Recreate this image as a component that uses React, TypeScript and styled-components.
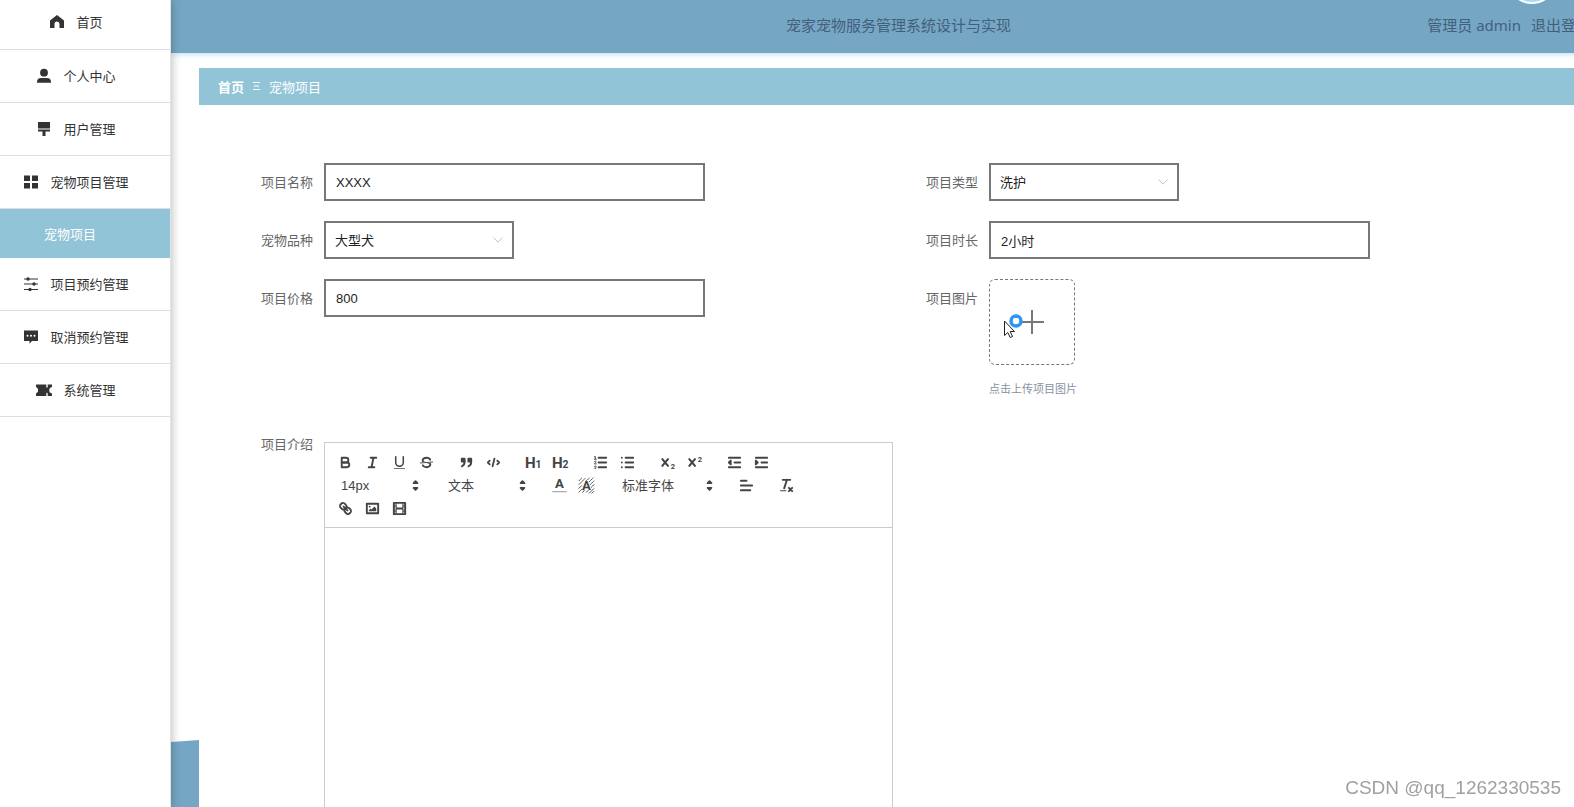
import React from 'react';
import styled, { createGlobalStyle } from 'styled-components';

const cjk = '"Noto Sans", "Noto Sans CJK SC", sans-serif';
const latin = '"Liberation Sans", "Noto Sans CJK SC", sans-serif';

const GlobalStyle = createGlobalStyle`
  * { box-sizing: border-box; }
  body {
    margin: 0;
    background: #fff;
    font-family: ${cjk};
    font-size: 13px;
    color: #333;
  }
`;

const Shell = styled.div`
  display: flex;
  height: 100vh;
  overflow: hidden;
`;

/* ---------- sidebar ---------- */

const Sidebar = styled.nav`
  position: relative;
  z-index: 2;
  flex: 0 0 171px;
  background: #fff;
  border-right: 1px solid #e0e4e6;
  box-shadow: 0 0 10px rgba(0, 0, 0, 0.3);
`;

const NavList = styled.ul`
  margin: 0;
  padding: 0;
  list-style: none;
`;

const NavLink = styled.a<{ $first?: boolean }>`
  display: flex;
  align-items: center;
  justify-content: center;
  gap: 12px;
  height: ${(p) => (p.$first ? 50 : 53)}px;
  padding: 0 17px ${(p) => (p.$first ? 6 : 0)}px 0;
  border-bottom: 1px solid #dcdfe2;
  color: #333;
  line-height: 20px;
  text-decoration: none;
`;

const SubLink = styled.a`
  display: flex;
  align-items: center;
  justify-content: center;
  height: 49px;
  padding-right: 30px;
  background: #92c4d7;
  color: #fff;
  text-decoration: none;
`;

const NavIcon = styled.svg`
  width: 14px;
  height: 14px;
  overflow: visible;
  flex: none;
`;

/* ---------- main column ---------- */

const Main = styled.div`
  flex: 1;
  min-width: 0;
  display: flex;
  flex-direction: column;
`;

const Header = styled.header`
  position: relative;
  z-index: 1;
  flex: 0 0 53px;
  width: calc(100% + 52px);
  display: grid;
  grid-template-columns: 1fr auto 1fr;
  align-items: center;
  padding: 0 35px 5px;
  background: #75a7c5;
  box-shadow: 0 1px 6px #b9dcf5;
  color: #43607b;
  font-size: 15px;
`;

const Title = styled.h1`
  grid-column: 2;
  margin: 0;
  font-size: 15px;
  font-weight: 400;
`;

const Account = styled.div`
  display: flex;
  justify-content: flex-end;
  gap: 10px;
`;

const Logout = styled.a`
  color: inherit;
  text-decoration: none;
`;

const Avatar = styled.span`
  position: absolute;
  top: -46px;
  right: 69px;
  width: 50px;
  height: 50px;
  border: 2px solid #fff;
  border-radius: 50%;
  background: #a5dcfa;
`;

const Workspace = styled.div`
  flex: 1;
  min-height: 0;
  display: flex;
`;

const Gutter = styled.div`
  flex: 0 0 28px;
  display: flex;
  flex-direction: column;
  justify-content: flex-end;
`;

const Wave = styled.div`
  height: 67px;
  background: #75a7c5;
  clip-path: polygon(0 2px, 100% 0, 100% 100%, 0 100%);
`;

const Page = styled.main`
  flex: 1;
  min-width: 0;
  padding-top: 15px;
`;

const Breadcrumb = styled.nav`
  display: flex;
  align-items: center;
  gap: 9px;
  height: 37px;
  padding: 0 19px 1px;
  background: #92c4d7;
  color: #fff;
`;

const CrumbLink = styled.a`
  color: #fff;
  font-weight: 700;
  text-decoration: none;
`;

const CrumbMark = styled.svg`
  width: 7px;
  height: 10px;
`;

/* ---------- form ---------- */

const Form = styled.form`
  display: grid;
  grid-template-columns: 1fr 1fr;
  row-gap: 20px;
  padding: 58px 0 0 45px;
`;

const Field = styled.div<{ $wide?: boolean }>`
  display: flex;
  align-items: flex-start;
  ${(p) => p.$wide && 'grid-column: 1 / -1; margin-top: 25px;'}
`;

const Label = styled.label<{ $short?: boolean }>`
  flex: 0 0 80px;
  padding-right: 11px;
  line-height: ${(p) => (p.$short ? 4 : 38)}px;
  text-align: right;
  color: #666;
`;

const TextInput = styled.input`
  width: 381px;
  height: 38px;
  padding: 0 10px;
  border: 2px solid #777;
  border-radius: 0;
  outline: none;
  background: #fff;
  color: #222;
  font: 13px ${latin};
`;

const SelectBox = styled.div`
  display: grid;
  align-items: center;
  width: 190px;
  & > * { grid-area: 1 / 1; }
`;

const Select = styled.select`
  width: 100%;
  height: 38px;
  padding: 0 30px 0 9px;
  border: 2px solid #777;
  border-radius: 0;
  appearance: none;
  background: #fff;
  color: #222;
  font: 13px ${cjk};
`;

const SelectArrow = styled.svg`
  justify-self: end;
  width: 10px;
  height: 6px;
  margin-right: 11px;
  pointer-events: none;
`;

const Upload = styled.div`
  display: flex;
  flex-direction: column;
  gap: 16px;
`;

const UploadButton = styled.button`
  position: relative;
  display: grid;
  place-items: center;
  width: 86px;
  height: 86px;
  padding: 0;
  border: 1px dashed #777;
  border-radius: 6px;
  background: #fff;
`;

const Plus = styled.svg`
  width: 24px;
  height: 24px;
`;

const Pointer = styled.svg`
  position: absolute;
  left: 13px;
  top: 33px;
  width: 22px;
  height: 26px;
`;

const Hint = styled.span`
  font-size: 11px;
  line-height: 16px;
  color: #8791a0;
`;

/* ---------- rich text editor ---------- */

const Editor = styled.div`
  width: 569px;
  border: 1px solid #ccc;
`;

const Toolbar = styled.div`
  padding: 8px 7px 7px;
  border-bottom: 1px solid #ccc;
`;

const ToolRow = styled.div`
  display: flex;
  gap: 13px;
  height: 23px;
`;

const Group = styled.div`
  display: flex;
  align-items: center;
`;

const Tool = styled.button`
  display: grid;
  place-items: center;
  width: 27px;
  height: 23px;
  padding: 0;
  border: 0;
  background: none;
`;

const ToolIcon = styled.svg`
  width: 17px;
  height: 17px;
  overflow: visible;
  fill: none;
  stroke: #444;
  stroke-width: 2;
  stroke-linecap: round;
  stroke-linejoin: round;
  .fill { fill: #444; }
  .solid { fill: #444; stroke: none; }
  .thin { stroke-width: 1; }
  text {
    fill: #444;
    stroke: none;
    font-family: Roboto, sans-serif;
    font-weight: 700;
  }
`;

const PickerBox = styled.div<{ $wide?: boolean }>`
  display: grid;
  align-items: center;
  width: ${(p) => (p.$wide ? 107 : 94)}px;
  & > * { grid-area: 1 / 1; }
`;

const PickerSelect = styled.select`
  width: 100%;
  height: 23px;
  padding: 0 18px 0 9px;
  border: 0;
  appearance: none;
  background: none;
  color: #444;
  font: 13px ${latin};
`;

const PickerArrow = styled(ToolIcon)`
  justify-self: end;
  margin-right: 2px;
  pointer-events: none;
`;

const EditorBody = styled.div`
  height: 400px;
  outline: none;
`;

const Watermark = styled.div`
  position: fixed;
  right: 13px;
  bottom: 7px;
  z-index: 3;
  font: 19px/24px "Liberation Sans", sans-serif;
  color: #a0a0a0;
`;

/* ---------- icon drawings ---------- */

const navIcons: Record<string, React.ReactNode> = {
  home: <path fill="#333" d="M7 0 14 5.600V13H9.500V9a2.500 2.500 0 0 0-5 0v4H0V5.600Z" />,
  user: (
    <g fill="#333">
      <circle cx="7" cy="3.700" r="3.900" />
      <path d="M0 13.700V12.500C0 10 2 9 4 9h6c2 0 4 1 4 3.500v1.200Z" />
    </g>
  ),
  brush: <path fill="#333" d="M1 0h12v6.500H1ZM1 7.500h12V9.600H8.500V14h-3V9.600H1Z" />,
  grid: <path fill="#333" d="M0 .500h6v5.500H0zM8 .500h6v5.500H8zM0 8h6v5.500H0zM8 8h6v5.500H8z" />,
  sliders: (
    <g>
      <path d="M0 2h14M0 7h14M0 12.500h14" stroke="#333" strokeWidth="1.200" />
      <g fill="#333">
        <circle cx="4" cy="2" r="1.700" />
        <circle cx="10" cy="7" r="1.700" />
        <circle cx="6" cy="12.500" r="1.700" />
      </g>
    </g>
  ),
  chat: (
    <g>
      <path fill="#333" d="M0 .500h14V11H8l-2.500 2.800V11H0Z" />
      <g fill="#fff">
        <circle cx="3.500" cy="5.800" r="1" />
        <circle cx="7" cy="5.800" r="1" />
        <circle cx="10.500" cy="5.800" r="1" />
      </g>
    </g>
  ),
  ticket: (
    <path
      fill="#333"
      d="M-1 1.500H9.300V4l.7 1 .7-1V1.500H15V4a3.300 3.300 0 0 0 0 6.500v2.500h-4.300v-2.500l-.7-1-.7 1V13H-1V10.500L1 8.800V5.700L-1 4Z"
    />
  ),
};

const toolIcons: Record<string, React.ReactNode> = {
  bold: (
    <>
      <path d="M5 4h4.500a2.500 2.500 0 0 1 0 5H5Z" />
      <path d="M5 9h5.500a2.500 2.500 0 0 1 0 5H5Z" />
    </>
  ),
  italic: <path d="M7 4h6M5 14h6M8 14l2-10" />,
  underline: (
    <>
      <path d="M5 3v6a4 4 0 0 0 8 0V3" strokeWidth="1.600" />
      <rect className="solid" x="3" y="15" width="12" height="1" rx=".5" />
    </>
  ),
  strike: (
    <>
      <path className="thin" d="M15.500 8.500l-13 1" />
      <path
        className="solid"
        d="M9.007,8C6.542,7.791,6,7.519,6,6.5,6,5.792,7.283,5,9,5c1.571,0,2.765.679,2.969,1.309a1,1,0,0,0,1.9-.617C13.356,4.106,11.354,3,9,3,6.2,3,4,4.538,4,6.5a3.2,3.2,0,0,0,.5,1.843Z"
      />
      <path
        className="solid"
        d="M8.984,10C11.457,10.208,12,10.479,12,11.5c0,.708-1.283,1.5-3,1.5-1.571,0-2.765-.679-2.969-1.309a1,1,0,1,0-1.9.617C4.644,13.894,6.646,15,9,15c2.8,0,5-1.538,5-3.5a3.2,3.2,0,0,0-.5-1.843Z"
      />
    </>
  ),
  quote: (
    <>
      <rect className="fill" x="4" y="5" width="3" height="3" />
      <rect className="fill" x="11" y="5" width="3" height="3" />
      <path d="M7 8c0 4-3 5-3 5M14 8c0 4-3 5-3 5" />
    </>
  ),
  code: <path d="M5 7 3 9l2 2M13 7l2 2-2 2M10 5 8 13" strokeWidth="1.900" />,
  h1: (
    <>
      <text x="0" y="15" fontSize="16">H</text>
      <text x="11" y="15" fontSize="11">1</text>
    </>
  ),
  h2: (
    <>
      <text x="0" y="15" fontSize="16">H</text>
      <text x="11" y="15" fontSize="11">2</text>
    </>
  ),
  ordered: (
    <>
      <path d="M7 4h8M7 9h8M7 14h8" />
      <path
        className="thin"
        d="M2.500 3 3.500 2.500V5.500M2.500 5.500h2M2.500 8.200c.3-1 1.900-.9 1.800.1 0 .9-1.800 1.600-1.800 2.200h2M2.500 13.200c.5-.9 1.800-.7 1.800.1 0 .5-.3.700-.6.700.4 0 .7.300.7.800 0 .9-1.500 1-1.900.1"
      />
    </>
  ),
  bullet: <path d="M7 4h8M7 9h8M7 14h8M3 4h0M3 9h0M3 14h0" />,
  sub: (
    <>
      <path d="M3.500 5.500l6 7M9.500 5.500l-6 7" strokeWidth="2.200" />
      <text x="12.500" y="16" fontSize="8">2</text>
    </>
  ),
  sup: (
    <>
      <path d="M3.500 5.500l6 7M9.500 5.500l-6 7" strokeWidth="2.200" />
      <text x="12.500" y="8" fontSize="8">2</text>
    </>
  ),
  outdent: (
    <>
      <path d="M3 4h12M3 14h12M9 9h6" />
      <path className="fill" d="M5 7v4L3 9Z" />
    </>
  ),
  indent: (
    <>
      <path d="M3 4h12M3 14h12M9 9h6" />
      <path className="fill" d="M3 7v4l2-2Z" />
    </>
  ),
  color: (
    <>
      <text x="9" y="12" fontSize="14" textAnchor="middle">A</text>
      <path d="M2 15.500h14" stroke="#aaa" strokeWidth="1.500" />
    </>
  ),
  background: (
    <>
      <path
        className="thin"
        strokeDasharray="1.500 1"
        d="M1 4l3-3M1 8l7-7M1 12l3.500-3.500M8 5l4-4M1 16l3-3M12 5l4-4M5 16l2-2M13 8l4-4M9 16l2-2M14 11l3-3M12 17l5-5M15 17l2-2"
      />
      <text x="9" y="14" fontSize="14" textAnchor="middle">A</text>
    </>
  ),
  align: <path d="M3 9h12M3 14h10M3 4h6" />,
  clean: (
    <>
      <path d="M5 3h8M6.500 12 9.500 3M11.500 11.500l3.500 3.500M15 11.500l-3.500 3.500" />
      <rect className="solid" x="2" y="14" width="7" height="1" rx=".5" />
    </>
  ),
  link: (
    <>
      <path d="M7 7l4 4" />
      <path d="M8.900 4.577a3.476 3.476 0 0 1 .36 4.679A3.476 3.476 0 0 1 4.577 8.900C3.185 7.500 2.035 6.400 4.217 4.217S7.500 3.185 8.900 4.577Z" />
      <path d="M13.423 9.100a3.476 3.476 0 0 0-4.679-.36 3.476 3.476 0 0 0 .36 4.679c1.392 1.392 2.500 2.542 4.679.36S14.815 10.500 13.423 9.100Z" />
    </>
  ),
  image: (
    <>
      <rect x="3" y="4" width="12" height="10" />
      <circle className="solid" cx="6" cy="7" r="1" />
      <path className="solid" d="M5 12v-1l2-2 1 1 3-3 2 2v3Z" />
    </>
  ),
  video: (
    <>
      <rect x="3" y="3" width="12" height="12" />
      <path
        className="solid"
        d="M5 3h1v12H5ZM12 3h1v12h-1ZM5 8h8v2H5ZM3 5h3v1H3ZM3 7h3v1H3ZM3 10h3v1H3ZM3 12h3v1H3ZM12 5h3v1h-3ZM12 7h3v1h-3ZM12 10h3v1h-3ZM12 12h3v1h-3Z"
      />
    </>
  ),
};

const Tools = ({ names }: { names: [string, string][] }) => (
  <Group>
    {names.map(([icon, label]) => (
      <Tool key={icon} type="button" aria-label={label}>
        <ToolIcon viewBox="0 0 18 18">{toolIcons[icon]}</ToolIcon>
      </Tool>
    ))}
  </Group>
);

const Picker = ({ value, label, wide }: { value: string; label: string; wide?: boolean }) => (
  <PickerBox $wide={wide}>
    <PickerSelect aria-label={label} defaultValue={value}>
      <option>{value}</option>
    </PickerSelect>
    <PickerArrow viewBox="0 0 18 18">
      <path className="fill" d="M7 11.500h4l-2 2ZM7 6.500h4l-2-2Z" />
    </PickerArrow>
  </PickerBox>
);

const TextField = ({ id, label, value }: { id: string; label: string; value: string }) => (
  <Field>
    <Label htmlFor={id}>{label}</Label>
    <TextInput id={id} type="text" defaultValue={value} />
  </Field>
);

const SelectField = ({ id, label, value }: { id: string; label: string; value: string }) => (
  <Field>
    <Label htmlFor={id}>{label}</Label>
    <SelectBox>
      <Select id={id} defaultValue={value}>
        <option>{value}</option>
      </Select>
      <SelectArrow viewBox="0 0 10 6">
        <path d="M.5 .5 5 5.200 9.500 .5" fill="none" stroke="#c0c4cc" />
      </SelectArrow>
    </SelectBox>
  </Field>
);

const menu: { icon: string; text: string; child?: string }[] = [
  { icon: 'home', text: '首页' },
  { icon: 'user', text: '个人中心' },
  { icon: 'brush', text: '用户管理' },
  { icon: 'grid', text: '宠物项目管理', child: '宠物项目' },
  { icon: 'sliders', text: '项目预约管理' },
  { icon: 'chat', text: '取消预约管理' },
  { icon: 'ticket', text: '系统管理' },
];

export default function App() {
  return (
    <>
      <GlobalStyle />
      <Shell>
        <Sidebar>
          <NavList>
            {menu.map((item, i) => (
              <li key={item.text}>
                <NavLink href="#" $first={i === 0}>
                  <NavIcon viewBox="0 0 14 14">{navIcons[item.icon]}</NavIcon>
                  {item.text}
                </NavLink>
                {item.child && <SubLink href="#">{item.child}</SubLink>}
              </li>
            ))}
          </NavList>
        </Sidebar>
        <Main>
          <Header>
            <Title>宠家宠物服务管理系统设计与实现</Title>
            <Account>
              <span>管理员 admin</span>
              <Logout href="#">退出登录</Logout>
            </Account>
            <Avatar />
          </Header>
          <Workspace>
            <Gutter>
              <Wave />
            </Gutter>
            <Page>
              <Breadcrumb>
                <CrumbLink href="#">首页</CrumbLink>
                <CrumbMark viewBox="0 0 7 10">
                  <path d="M0 1.500h7M1 5h5M0 8.500h7" stroke="#fff" />
                </CrumbMark>
                <span>宠物项目</span>
              </Breadcrumb>
              <Form>
                <TextField id="name" label="项目名称" value="XXXX" />
                <SelectField id="type" label="项目类型" value="洗护" />
                <SelectField id="breed" label="宠物品种" value="大型犬" />
                <TextField id="duration" label="项目时长" value="2小时" />
                <TextField id="price" label="项目价格" value="800" />
                <Field>
                  <Label htmlFor="picture">项目图片</Label>
                  <Upload>
                    <UploadButton id="picture" type="button">
                      <Plus viewBox="0 0 24 24">
                        <path d="M12 0v24M0 12h24" stroke="#777" strokeWidth="2" />
                      </Plus>
                      <Pointer viewBox="0 0 22 26">
                        <circle cx="13" cy="8" r="5" fill="#fff" stroke="#2f96f0" strokeWidth="3.500" />
                        <path
                          d="M1.500 8v14.500l3.300-3 2.400 5 2.300-1-2.300-5h4.300Z"
                          fill="#fff"
                          stroke="#222"
                        />
                      </Pointer>
                    </UploadButton>
                    <Hint>点击上传项目图片</Hint>
                  </Upload>
                </Field>
                <Field $wide>
                  <Label as="span" id="intro" $short>项目介绍</Label>
                  <Editor>
                    <Toolbar>
                      <ToolRow>
                        <Tools names={[['bold', '加粗'], ['italic', '斜体'], ['underline', '下划线'], ['strike', '删除线']]} />
                        <Tools names={[['quote', '引用'], ['code', '代码']]} />
                        <Tools names={[['h1', '一级标题'], ['h2', '二级标题']]} />
                        <Tools names={[['ordered', '有序列表'], ['bullet', '无序列表']]} />
                        <Tools names={[['sub', '下标'], ['sup', '上标']]} />
                        <Tools names={[['outdent', '减少缩进'], ['indent', '增加缩进']]} />
                      </ToolRow>
                      <ToolRow>
                        <Picker value="14px" label="字号" />
                        <Picker value="文本" label="段落" />
                        <Tools names={[['color', '文字颜色'], ['background', '背景颜色']]} />
                        <Picker value="标准字体" label="字体" wide />
                        <Tools names={[['align', '对齐']]} />
                        <Tools names={[['clean', '清除格式']]} />
                      </ToolRow>
                      <ToolRow>
                        <Tools names={[['link', '链接'], ['image', '图片'], ['video', '视频']]} />
                      </ToolRow>
                    </Toolbar>
                    <EditorBody contentEditable suppressContentEditableWarning role="textbox" aria-labelledby="intro" />
                  </Editor>
                </Field>
              </Form>
            </Page>
          </Workspace>
        </Main>
      </Shell>
      <Watermark>CSDN @qq_1262330535</Watermark>
    </>
  );
}
